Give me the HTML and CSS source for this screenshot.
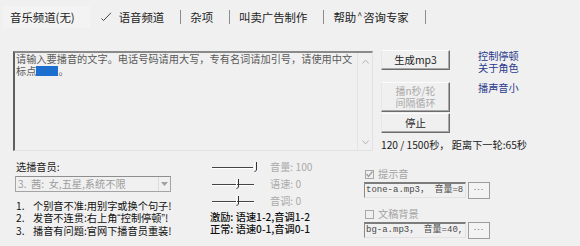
FILE: index.html
```html
<!DOCTYPE html>
<html lang="zh">
<head>
<meta charset="utf-8">
<title>语音频道</title>
<link rel="stylesheet" href="styles.css">
</head>
<body>
<div class="app">
  <nav class="tabs">
    <span class="tab tab-first">音乐频道(无)</span>
    <span class="tab tab-active"><svg class="tick" width="11" height="10" viewBox="0 0 11 10"><path d="M0.5 6.5 L2.5 8.5 L10 0.8" fill="none" stroke="#444" stroke-width="1"/></svg>语音频道</span>
    <span class="sep"></span>
    <span class="tab">杂项</span>
    <span class="sep"></span>
    <span class="tab">叫卖广告制作</span>
    <span class="sep"></span>
    <span class="tab">帮助<span class="caret">^</span>咨询专家</span>
    <span class="sep"></span>
  </nav>

  <section class="top">
    <div class="editor">
      <div class="editor-text">请输入要播音的文字。电话号码请用大写，专有名词请加引号，请使用中文<br>标点<span class="sel"></span>。</div>
      <div class="vscroll">
        <svg width="7" height="5" viewBox="0 0 7 5"><path d="M0.5 4.5 L3.5 1 L6.5 4.5" fill="none" stroke="#b4b4b4"/></svg>
        <svg width="7" height="5" viewBox="0 0 7 5"><path d="M0.5 0.5 L3.5 4 L6.5 0.5" fill="none" stroke="#b4b4b4"/></svg>
      </div>
    </div>
    <div class="controls">
      <button class="btn">生成mp3</button>
      <button class="btn btn-loop" disabled>播n秒/轮<br>间隔循环</button>
      <button class="btn btn-stop">停止</button>
      <div class="status">120 / 1500秒， 距离下一轮:65秒</div>
    </div>
    <div class="links">
      <a>控制停顿</a>
      <a>关于角色</a>
      <a class="link-gap">播声音小</a>
    </div>
  </section>

  <section class="bottom">
    <div class="voice">
      <div class="voice-label">选播音员:</div>
      <div class="select">
        <span class="select-text">3.&nbsp; 茜:&nbsp; 女,五星,系统不限</span>
        <span class="select-arrow"><svg width="7" height="4" viewBox="0 0 7 4"><path d="M0 0 H7 L3.5 4 Z" fill="#a0a0a0"/></svg></span>
      </div>
      <ol class="tips">
        <li><span class="num">1.</span><span>个别音不准:用别字或换个句子!</span></li>
        <li><span class="num">2.</span><span>发音不连贯:右上角<span class="q">“</span>控制停顿<span class="q">”</span>!</span></li>
        <li><span class="num">3.</span><span>播音有问题:官网下播音员重装!</span></li>
      </ol>
    </div>

    <div class="tuning">
      <div class="slider-row">
        <svg class="slider" width="48" height="12" viewBox="0 0 48 12"><path d="M0 6.5 H41" stroke="#444"/><path d="M0 7.5 H41" stroke="#fff"/><path d="M42.5 1 V9" stroke="#fff"/><path d="M44.5 1 V9 L42.5 11" fill="none" stroke="#333"/></svg>
        <span class="slider-label">音量: 100</span>
      </div>
      <div class="slider-row">
        <svg class="slider" width="48" height="12" viewBox="0 0 48 12"><path d="M0 6.5 H42" stroke="#444"/><path d="M0 7.5 H42" stroke="#fff"/><path d="M24.5 1 V9" stroke="#fff"/><path d="M26.5 1 V9 L24.5 11" fill="none" stroke="#333"/></svg>
        <span class="slider-label">语速: 0</span>
      </div>
      <div class="slider-row">
        <svg class="slider" width="48" height="12" viewBox="0 0 48 12"><path d="M0 6.5 H42" stroke="#444"/><path d="M0 7.5 H42" stroke="#fff"/><path d="M24.5 1 V9" stroke="#fff"/><path d="M26.5 1 V9 L24.5 11" fill="none" stroke="#333"/></svg>
        <span class="slider-label">音调: 0</span>
      </div>
      <div class="presets">
        <div>激励: 语速1-2,音调1-2</div>
        <div>正常: 语速0-1,音调0-1</div>
      </div>
    </div>

    <div class="sounds">
      <label class="check-row">
        <span class="checkbox"><svg width="7" height="7" viewBox="0 0 7 7"><path d="M0.5 3 L2.5 5.5 L6.5 0.5" fill="none" stroke="#a0a0a0" stroke-width="1.3"/></svg></span>
        <span>提示音</span>
      </label>
      <div class="file-row">
        <div class="field">tone-a.mp3， 音量=8</div>
        <button class="dots">...</button>
      </div>
      <label class="check-row check-row-2">
        <span class="checkbox"></span>
        <span>文稿背景</span>
      </label>
      <div class="file-row">
        <div class="field">bg-a.mp3， 音量=40,</div>
        <button class="dots">...</button>
      </div>
    </div>
  </section>
</div>
</body>
</html>
```

FILE: styles.css
```css
* {
  box-sizing: border-box;
  margin: 0;
  padding: 0;
}

html, body {
  width: 580px;
  height: 246px;
  overflow: hidden;
}

body {
  background: #f0f0f0;
  font-family: "Noto Sans CJK SC", "Liberation Sans", sans-serif;
  font-size: 10.2px;
  line-height: 12px;
  color: #1e1e1e;
}

/* ---------- tabs ---------- */
.tabs {
  display: flex;
  align-items: center;
  height: 28px;
  padding-top: 6px;
  font-size: 11.4px;
  color: #222;
}

.tab {
  display: flex;
  align-items: center;
  white-space: nowrap;
}

.tab-first {
  margin-left: 3px;
  padding: 0 15px 0 7px;
  height: 22px;
  background: #f3f3f3;
}

.tab-active {
  margin-left: 11px;
}

.tick {
  margin-right: 7px;
}

.caret {
  font-size: 9px;
  margin: 0 1px;
  align-self: flex-start;
  line-height: 10px;
}

.sep {
  width: 1px;
  height: 14px;
  background: #8c8c8c;
  margin: 0 9px 0 16px;
}

/* ---------- top area ---------- */
.top {
  display: flex;
  margin-top: 22px;
  padding-left: 13px;
}

.editor {
  display: flex;
  margin-top: 1px;
  width: 360px;
  height: 100px;
  border-top: 2px solid #8a8a8a;
  border-left: 2px solid #5f5f5f;
  border-right: 1px solid #e2e2e2;
  border-bottom: 1px solid #e2e2e2;
}

.editor-text {
  flex: 1;
  padding: 0 0 0 1px;
  color: #5a5a5a;
  white-space: nowrap;
  line-height: 12px;
}

.sel {
  display: inline-block;
  width: 22px;
  height: 10px;
  background: #1c6fcf;
  vertical-align: -1px;
}

.vscroll {
  width: 15px;
  border-left: 1px solid #e4e4e4;
  display: flex;
  flex-direction: column;
  justify-content: space-between;
  align-items: center;
  padding: 6px 0 5px;
}

.controls {
  display: flex;
  flex-direction: column;
  width: 69px;
  margin-left: 8px;
}

.btn {
  height: 20px;
  font: inherit;
  font-size: 10.4px;
  color: #1e1e1e;
  background: #f0f0f0;
  border: 1px solid;
  border-color: #fcfcfc #6c6c6c #6c6c6c #e6e6e6;
  box-shadow: inset -1px -1px #a8a8a8;
}

.btn-loop {
  margin-top: 12px;
  height: 30px;
  font-size: 10px;
  line-height: 12px;
  color: #a9a9a9;
}

.btn-stop {
  margin-top: 1px;
}

.status {
  margin-top: 6px;
  white-space: nowrap;
  color: #222;
}

.links {
  display: flex;
  flex-direction: column;
  margin-left: 28px;
  color: #2b3a8c;
}

.link-gap {
  margin-top: 8px;
}

/* ---------- bottom area ---------- */
.bottom {
  display: flex;
}

.voice {
  width: 156px;
  margin-left: 15px;
}

.voice-label {
  margin-top: 10px;
  padding-left: 1px;
}

.select {
  display: flex;
  align-items: center;
  margin-top: 3px;
  height: 16px;
  border: 1px solid #a4a4a4;
  border-top-color: #8e8e8e;
  color: #9c9c9c;
}

.select-text {
  flex: 1;
  padding-left: 2px;
  white-space: nowrap;
}

.select-arrow {
  width: 12px;
  height: 100%;
  display: flex;
  align-items: center;
  justify-content: center;
  border-left: 1px solid #dcdcdc;
}

.tips {
  list-style: none;
  margin-top: 8px;
  padding-left: 1px;
  color: #111;
}

.tips li {
  display: flex;
  white-space: nowrap;
}

.num {
  flex: none;
  width: 17px;
}

.q {
  font-family: "Liberation Sans", sans-serif;
}

.tuning {
  width: 150px;
  margin-left: 39px;
  padding-top: 7px;
}

.slider-row {
  display: flex;
  align-items: center;
  height: 17px;
}

.slider {
  margin-left: 2px;
}

.slider-label {
  margin-left: 10px;
  color: #ababab;
}

.presets {
  margin-top: 2px;
  color: #111;
  font-weight: 500;
  white-space: nowrap;
}

.sounds {
  margin-left: 4px;
  width: 127px;
  padding-top: 17px;
}

.check-row {
  display: flex;
  align-items: center;
  height: 12px;
  color: #a4a4a4;
}

.check-row-2 {
  margin-top: 9px;
}

.checkbox {
  width: 9px;
  height: 9px;
  margin: 0 4px 0 1px;
  border: 1px solid #a8a8a8;
  display: flex;
  align-items: center;
  justify-content: center;
}

.file-row {
  display: flex;
  margin-top: 2px;
  height: 17px;
}

.field {
  width: 102px;
  height: 16px;
  border-top: 2px solid #7c7c7c;
  border-left: 1px solid #8a8a8a;
  border-right: 1px solid #e2e2e2;
  border-bottom: 1px solid #e2e2e2;
  padding-left: 1px;
  font-family: "Liberation Mono", "Noto Sans CJK SC", monospace;
  font-size: 9px;
  line-height: 12px;
  color: #4a4a4a;
  white-space: nowrap;
  overflow: hidden;
}

.dots {
  display: flex;
  align-items: flex-start;
  justify-content: center;
  width: 22px;
  height: 17px;
  margin-left: 2px;
  padding: 0;
  font-family: "Liberation Sans", sans-serif;
  font-size: 9px;
  line-height: 9px;
  letter-spacing: 1px;
  color: #666;
  background: #f3f3f3;
  border: 1px solid #9c9c9c;
}
```
